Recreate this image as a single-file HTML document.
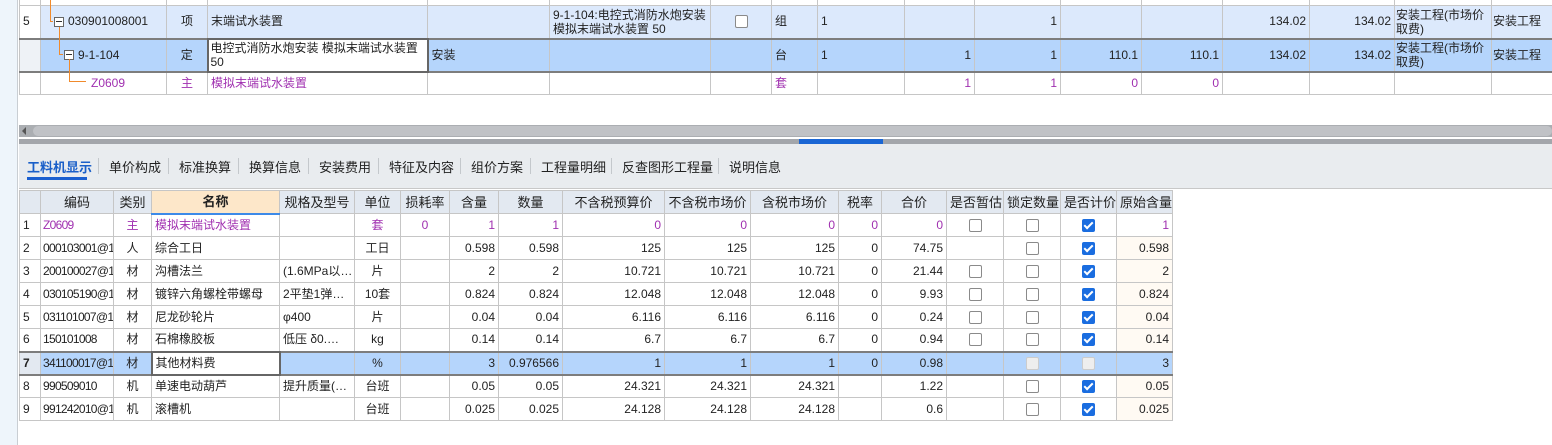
<!DOCTYPE html>
<html><head><meta charset="utf-8"><style>
*{margin:0;padding:0;box-sizing:border-box}
body{width:1552px;height:445px;overflow:hidden;background:#fff;position:relative;font-family:"Liberation Sans","Noto Sans CJK SC",sans-serif;font-size:12px;color:#222}
.abs{position:absolute}
table{border-collapse:collapse;table-layout:fixed;position:absolute}
td{border:1px solid #c6c6c6;padding:0 3px;white-space:nowrap;overflow:hidden;line-height:13px}
.r{text-align:right}.c{text-align:center}
.p{color:#a030b0}
.cd{font-size:12px;letter-spacing:-0.7px;padding:0 1px 0 2px}
.cb{display:inline-block;width:13px;height:13px;border:1px solid #8a8a8a;border-radius:2px;background:#fff;vertical-align:middle}
.ck{display:inline-block;width:13px;height:13px;border-radius:2px;background:#1a6de0;vertical-align:middle;position:relative}
.ck:after{content:"";position:absolute;left:4px;top:1px;width:3px;height:7px;border:solid #fff;border-width:0 2px 2px 0;transform:rotate(45deg)}
.dis{display:inline-block;width:13px;height:13px;border:1px solid #ccc;border-radius:2px;background:#eee;vertical-align:middle}
.tab{position:absolute;top:157px;font-size:13px;color:#222}
.sep{position:absolute;top:158px;width:1px;height:16px;background:#c4c8cc}
.mn{display:inline-block;width:10px;height:10px;border:1px solid #666;background:#fff;vertical-align:middle;position:relative;margin-right:4px}
.mn:after{content:"";position:absolute;left:1px;top:3px;width:6px;height:1px;background:#333}
.o{position:absolute;background:#f08a2c}
</style></head><body>
<div class="abs" style="left:0;top:0;width:18px;height:445px;background:#eef5fb;border-right:1px solid #c9ced3"></div>

<table style="left:19px;top:-28px;width:1533px">
<colgroup><col style="width:21px"><col style="width:126px"><col style="width:41px"><col style="width:220px"><col style="width:122px"><col style="width:161px"><col style="width:61px"><col style="width:46px"><col style="width:87px"><col style="width:70px"><col style="width:86px"><col style="width:81px"><col style="width:81px"><col style="width:87px"><col style="width:85px"><col style="width:97px"><col style="width:61px"></colgroup>
<tr style="height:33px"><td></td><td></td><td></td><td></td><td></td><td></td><td></td><td></td><td></td><td></td><td></td><td></td><td></td><td></td><td></td><td></td><td></td></tr>
<tr style="height:33px;background:#dce9fc"><td style="background:#fff">5</td><td style="padding-left:13px"><span class="mn"></span>030901008001</td><td class="c">项</td><td>末端试水装置</td><td></td><td style="white-space:normal;line-height:14px">9-1-104:电控式消防水炮安装 模拟末端试水装置 50</td><td class="c"><span class="cb"></span></td><td>组</td><td>1</td><td></td><td class="r">1</td><td></td><td></td><td class="r">134.02</td><td class="r">134.02</td><td style="white-space:normal;line-height:14px;padding:0 1px">安装工程(市场价取费)</td><td style="padding:0 1px">安装工程</td></tr>
<tr style="height:33px;background:#b5d5fc;border-top:2px solid #7d7d7d;border-bottom:2px solid #7d7d7d"><td style="background:#eef2f6"></td><td style="padding-left:23px"><span class="mn"></span>9-1-104</td><td class="c">定</td><td style="background:#fff;border:2px solid #666;white-space:normal;line-height:14px;padding:0 2px">电控式消防水炮安装 模拟末端试水装置50</td><td>安装</td><td></td><td></td><td>台</td><td>1</td><td class="r">1</td><td class="r">1</td><td class="r">110.1</td><td class="r">110.1</td><td class="r">134.02</td><td class="r">134.02</td><td style="white-space:normal;line-height:14px;padding:0 1px">安装工程(市场价取费)</td><td style="padding:0 1px">安装工程</td></tr>
<tr style="height:23px" class="p"><td></td><td style="padding-left:50px">Z0609</td><td class="c">主</td><td>模拟末端试水装置</td><td></td><td></td><td></td><td>套</td><td></td><td class="r">1</td><td class="r">1</td><td class="r">0</td><td class="r">0</td><td></td><td></td><td></td><td></td></tr>
</table>
<div class="o" style="left:50px;top:0;width:1px;height:21px"></div>
<div class="o" style="left:50px;top:21px;width:3px;height:1px"></div>
<div class="o" style="left:59px;top:27px;width:1px;height:27px"></div>
<div class="o" style="left:59px;top:54px;width:4px;height:1px"></div>
<div class="o" style="left:69px;top:59px;width:1px;height:22px"></div>
<div class="o" style="left:69px;top:81px;width:17px;height:1px"></div>

<div class="abs" style="left:19px;top:125px;width:1533px;height:12px;background:#abaeb2"></div>
<div class="abs" style="left:33px;top:126px;width:1519px;height:10px;background:#c0c2c6;border-radius:5px"></div>
<div class="abs" style="left:22px;top:127px;width:0;height:0;border:4px solid transparent;border-right-color:#555;border-left:0"></div>
<div class="abs" style="left:19px;top:139px;width:1533px;height:5px;background:#a3a6ab"></div>
<div class="abs" style="left:799px;top:139px;width:84px;height:5px;background:#1a66d4"></div>
<div class="abs" style="left:19px;top:144px;width:1533px;height:45px;background:#e9ecef;border-bottom:1px solid #c8c8c8"></div>

<div class="tab" style="left:27px;color:#1a5fc8;font-weight:bold">工料机显示</div>
<div class="abs" style="left:27px;top:177px;width:60px;height:3px;background:#1a5fd0"></div>
<div class="sep" style="left:98px"></div><div class="tab" style="left:109px">单价构成</div>
<div class="sep" style="left:168px"></div><div class="tab" style="left:179px">标准换算</div>
<div class="sep" style="left:238px"></div><div class="tab" style="left:249px">换算信息</div>
<div class="sep" style="left:308px"></div><div class="tab" style="left:319px">安装费用</div>
<div class="sep" style="left:378px"></div><div class="tab" style="left:389px">特征及内容</div>
<div class="sep" style="left:460px"></div><div class="tab" style="left:471px">组价方案</div>
<div class="sep" style="left:530px"></div><div class="tab" style="left:541px">工程量明细</div>
<div class="sep" style="left:611px"></div><div class="tab" style="left:622px">反查图形工程量</div>
<div class="sep" style="left:718px"></div><div class="tab" style="left:729px">说明信息</div>

<table style="left:19px;top:190px;width:1154px">
<colgroup><col style="width:21px"><col style="width:73px"><col style="width:38px"><col style="width:128px"><col style="width:75px"><col style="width:46px"><col style="width:49px"><col style="width:49px"><col style="width:64px"><col style="width:102px"><col style="width:86px"><col style="width:88px"><col style="width:43px"><col style="width:65px"><col style="width:57px"><col style="width:57px"><col style="width:56px"><col style="width:56px"></colgroup>
<tr style="height:23px;background:#e3e9f1;font-size:13px" class="c"><td></td><td>编码</td><td>类别</td><td style="background:#fde7c9;font-weight:bold;border-bottom:2px solid #3d8ae8">名称</td><td>规格及型号</td><td>单位</td><td>损耗率</td><td>含量</td><td>数量</td><td>不含税预算价</td><td>不含税市场价</td><td>含税市场价</td><td>税率</td><td>合价</td><td>是否暂估</td><td>锁定数量</td><td>是否计价</td><td>原始含量</td></tr>
<tr style="height:23px" class="p"><td style="color:#222">1</td><td class="cd">Z0609</td><td class="c">主</td><td>模拟末端试水装置</td><td></td><td class="c">套</td><td class="c">0</td><td class="r">1</td><td class="r">1</td><td class="r">0</td><td class="r">0</td><td class="r">0</td><td class="r">0</td><td class="r">0</td><td class="c"><span class="cb"></span></td><td class="c"><span class="cb"></span></td><td class="c"><span class="ck"></span></td><td class="r">1</td></tr>
<tr style="height:23px"><td>2</td><td class="cd">000103001@1</td><td class="c">人</td><td>综合工日</td><td></td><td class="c">工日</td><td></td><td class="r">0.598</td><td class="r">0.598</td><td class="r">125</td><td class="r">125</td><td class="r">125</td><td class="r">0</td><td class="r">74.75</td><td></td><td class="c"><span class="cb"></span></td><td class="c"><span class="ck"></span></td><td class="r" style="background:#fffaf3">0.598</td></tr>
<tr style="height:23px"><td>3</td><td class="cd">200100027@1</td><td class="c">材</td><td>沟槽法兰</td><td>(1.6MPa以…</td><td class="c">片</td><td></td><td class="r">2</td><td class="r">2</td><td class="r">10.721</td><td class="r">10.721</td><td class="r">10.721</td><td class="r">0</td><td class="r">21.44</td><td class="c"><span class="cb"></span></td><td class="c"><span class="cb"></span></td><td class="c"><span class="ck"></span></td><td class="r" style="background:#fffaf3">2</td></tr>
<tr style="height:23px"><td>4</td><td class="cd">030105190@1</td><td class="c">材</td><td>镀锌六角螺栓带螺母</td><td>2平垫1弹…</td><td class="c">10套</td><td></td><td class="r">0.824</td><td class="r">0.824</td><td class="r">12.048</td><td class="r">12.048</td><td class="r">12.048</td><td class="r">0</td><td class="r">9.93</td><td class="c"><span class="cb"></span></td><td class="c"><span class="cb"></span></td><td class="c"><span class="ck"></span></td><td class="r" style="background:#fffaf3">0.824</td></tr>
<tr style="height:23px"><td>5</td><td class="cd">031101007@1</td><td class="c">材</td><td>尼龙砂轮片</td><td>φ400</td><td class="c">片</td><td></td><td class="r">0.04</td><td class="r">0.04</td><td class="r">6.116</td><td class="r">6.116</td><td class="r">6.116</td><td class="r">0</td><td class="r">0.24</td><td class="c"><span class="cb"></span></td><td class="c"><span class="cb"></span></td><td class="c"><span class="ck"></span></td><td class="r" style="background:#fffaf3">0.04</td></tr>
<tr style="height:23px"><td>6</td><td class="cd">150101008</td><td class="c">材</td><td>石棉橡胶板</td><td>低压 δ0.…</td><td class="c">kg</td><td></td><td class="r">0.14</td><td class="r">0.14</td><td class="r">6.7</td><td class="r">6.7</td><td class="r">6.7</td><td class="r">0</td><td class="r">0.94</td><td class="c"><span class="cb"></span></td><td class="c"><span class="cb"></span></td><td class="c"><span class="ck"></span></td><td class="r" style="background:#fffaf3">0.14</td></tr>
<tr style="height:23px;background:#b5d5fc;border-top:2px solid #7d7d7d;border-bottom:2px solid #7d7d7d"><td style="background:#e3e9f1;font-weight:bold">7</td><td class="cd">341100017@1</td><td class="c">材</td><td style="background:#fff;border:2px solid #666">其他材料费</td><td></td><td class="c">%</td><td></td><td class="r">3</td><td class="r">0.976566</td><td class="r">1</td><td class="r">1</td><td class="r">1</td><td class="r">0</td><td class="r">0.98</td><td></td><td class="c"><span class="dis"></span></td><td class="c"><span class="dis"></span></td><td class="r">3</td></tr>
<tr style="height:23px"><td>8</td><td class="cd">990509010</td><td class="c">机</td><td>单速电动葫芦</td><td>提升质量(…</td><td class="c">台班</td><td></td><td class="r">0.05</td><td class="r">0.05</td><td class="r">24.321</td><td class="r">24.321</td><td class="r">24.321</td><td></td><td class="r">1.22</td><td></td><td class="c"><span class="cb"></span></td><td class="c"><span class="ck"></span></td><td class="r" style="background:#fffaf3">0.05</td></tr>
<tr style="height:23px"><td>9</td><td class="cd">991242010@1</td><td class="c">机</td><td>滚槽机</td><td></td><td class="c">台班</td><td></td><td class="r">0.025</td><td class="r">0.025</td><td class="r">24.128</td><td class="r">24.128</td><td class="r">24.128</td><td></td><td class="r">0.6</td><td></td><td class="c"><span class="cb"></span></td><td class="c"><span class="ck"></span></td><td class="r" style="background:#fffaf3">0.025</td></tr>
</table>
</body></html>
